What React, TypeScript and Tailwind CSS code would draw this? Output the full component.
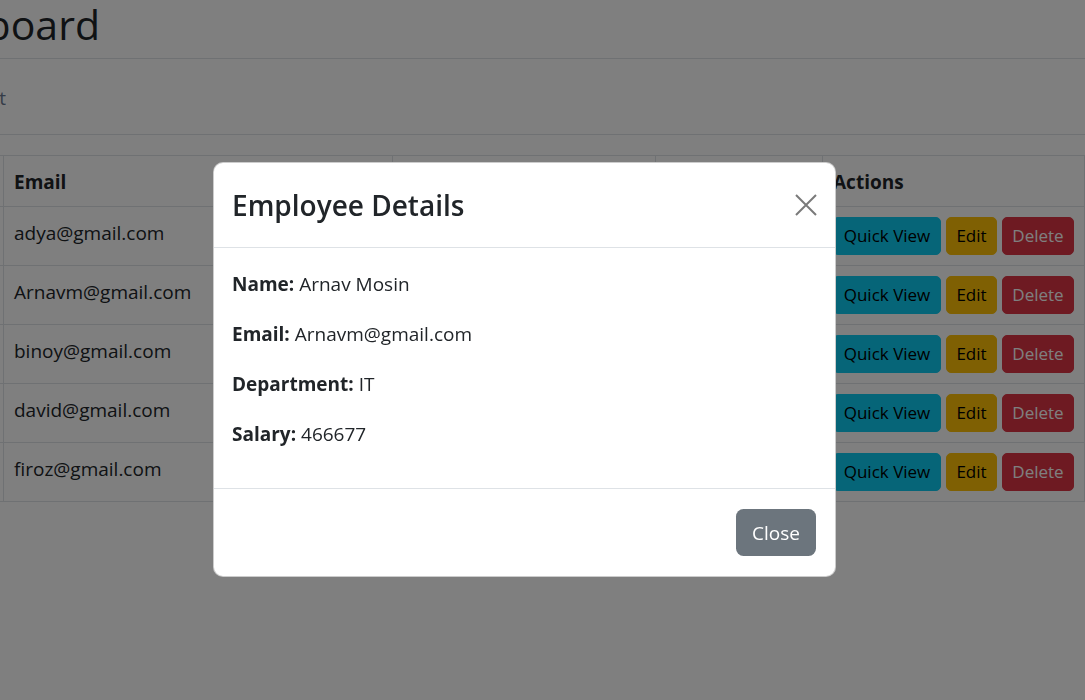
import React from 'react';

type Employee = {
  name: string;
  email: string;
  department: string;
  salary: number;
};

const employees: Employee[] = [
  { name: 'Adya Sharma', email: 'adya@gmail.com', department: 'HR', salary: 52000 },
  { name: 'Arnav Mosin', email: 'Arnavm@gmail.com', department: 'IT', salary: 466677 },
  { name: 'Binoy Thomas', email: 'binoy@gmail.com', department: 'Finance', salary: 61000 },
  { name: 'David Paul', email: 'david@gmail.com', department: 'Sales', salary: 45000 },
  { name: 'Firoz Khan', email: 'firoz@gmail.com', department: 'Marketing', salary: 58000 },
];

const selected = employees[1];

const cell = 'border-r border-b border-[#dee2e6] px-[10px] pt-[11px] pb-[9px] leading-[30px]';
const btnCell = 'border-r border-b border-[#dee2e6] p-[10px] flex items-start gap-[5px]';

const EmployeeTable = () => (
  <div className="-ml-[300px] mt-[20px] w-max border-t border-l border-[#dee2e6] grid grid-cols-[303px_389px_263px_167px_262px]">
    <div className={`${cell} font-bold`}>Name</div>
    <div className={`${cell} font-bold`}>Email</div>
    <div className={`${cell} font-bold`}>Department</div>
    <div className={`${cell} font-bold`}>Salary</div>
    <div className={`${cell} font-bold`}>Actions</div>
    {employees.map((emp) => (
      <React.Fragment key={emp.email}>
        <div className={cell}>{emp.name}</div>
        <div className={cell}>{emp.email}</div>
        <div className={cell}>{emp.department}</div>
        <div className={cell}>{emp.salary}</div>
        <div className={btnCell}>
          <button className="h-[38px] w-[108px] rounded-[5px] border border-[#0dcaf0] bg-[#0dcaf0] text-black text-[17px] leading-[26px]">
            Quick View
          </button>
          <button className="h-[38px] w-[51px] rounded-[5px] border border-[#ffc107] bg-[#ffc107] text-black text-[17px] leading-[26px]">
            Edit
          </button>
          <button className="h-[38px] w-[72px] rounded-[5px] border border-[#dc3545] bg-[#dc3545] text-white text-[17px] leading-[26px]">
            Delete
          </button>
        </div>
      </React.Fragment>
    ))}
  </div>
);

const DetailsModal = ({ emp }: { emp: Employee }) => (
  <div className="fixed inset-0 bg-black/50">
    <div className="absolute left-[213px] top-[162px] w-[623px] bg-white rounded-[10px] border border-black/20 text-[#212529]">
      <div className="flex items-center h-[85px] border-b border-[#dee2e6] pl-[18px] pr-[18px]">
        <h4 className="text-[28px] leading-[36px] font-semibold">Employee Details</h4>
        <button className="ml-auto w-[22px] h-[22px]" aria-label="Close">
          <svg width="22" height="22" viewBox="0 0 22 22" fill="none" stroke="#7a7a7a" strokeWidth="2">
            <path d="M1 1L21 21M21 1L1 21" />
          </svg>
        </button>
      </div>
      <div className="px-[18px] pt-[21px] pb-[19px] text-[19px] leading-[30px]">
        <p className="mb-[20px]"><strong>Name:</strong> {emp.name}</p>
        <p className="mb-[20px]"><strong>Email:</strong> {emp.email}</p>
        <p className="mb-[20px]"><strong>Department:</strong> {emp.department}</p>
        <p className="mb-[20px]"><strong>Salary:</strong> {emp.salary}</p>
      </div>
      <div className="flex justify-end border-t border-[#dee2e6] pt-[20px] pb-[20px] pr-[19px]">
        <button className="h-[47px] w-[80px] rounded-[7.5px] bg-[#6c757d] text-white text-[19px] leading-[30px]">
          Close
        </button>
      </div>
    </div>
  </div>
);

export default function App() {
  return (
    <div className="relative min-h-screen overflow-hidden bg-white text-[#212529] text-[19px] font-['Open_Sans',sans-serif]">
      <div className="h-[59px] border-b border-[#dee2e6]">
        <div className="flex justify-end w-[100px] overflow-hidden whitespace-nowrap">
          <h1 className="text-[41px] leading-[48px] font-normal">Employee Dashboard</h1>
        </div>
      </div>
      <div className="h-[76px] border-b border-[#dee2e6] flex items-center pt-[3px]">
        <div className="flex justify-end w-[6px] overflow-hidden whitespace-nowrap">
          <span className="text-[#6a7890] leading-[30px]">Employee List</span>
        </div>
      </div>
      <EmployeeTable />
      <DetailsModal emp={selected} />
    </div>
  );
}
